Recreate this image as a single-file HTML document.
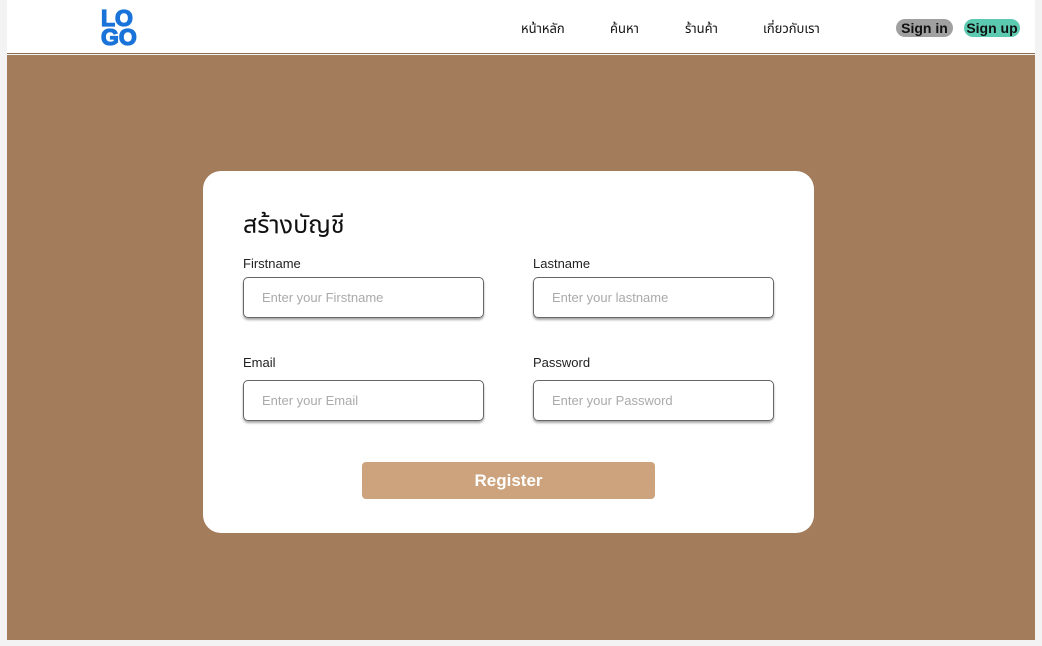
<!DOCTYPE html>
<html><head><meta charset="utf-8"><style>
*{margin:0;padding:0;box-sizing:border-box}
body{width:1042px;height:646px;background:#f3f3f3;font-family:"Liberation Sans","Noto Sans Thai","Tlwg Typist",sans-serif;position:relative;overflow:hidden}
.hdr{position:absolute;left:7px;top:0;width:1028px;height:54px;background:#fff;border-bottom:1px solid #8a6d55}
.logo{position:absolute;left:101px;top:9px;color:#1a73d9;font-weight:bold;font-size:23px;line-height:19px;letter-spacing:0px;-webkit-text-stroke:1.3px #1a73d9}
.nav{position:absolute;top:19px;font-size:13px;color:#111}
.pill{position:absolute;top:19px;height:18px;border-radius:9px;font-weight:bold;font-size:14px;line-height:18px;text-align:center;color:#111}
.main{position:absolute;left:7px;top:55px;width:1028px;height:585px;background:#a37c5c}
.card{position:absolute;left:203px;top:171px;width:611px;height:362px;background:#fff;border-radius:18px}
h1{position:absolute;left:40px;top:36px;font-size:25px;font-weight:normal;color:#111}
.lbl{position:absolute;font-size:13px;color:#222}
.inp{position:absolute;width:241px;height:41px;border:1px solid #666;border-radius:5px;box-shadow:0 2px 2px rgba(0,0,0,.35);font-size:13px;color:#aaa;padding-left:18px;line-height:39px}
.btn{position:absolute;left:159px;top:291px;width:293px;height:37px;background:#cca37c;border-radius:4px;color:#fff;font-weight:bold;font-size:17px;text-align:center;line-height:37px}
</style></head><body>
<div class="hdr"></div>
<div class="logo">LO<br>GO</div>
<div class="nav" style="left:521px">หน้าหลัก</div>
<div class="nav" style="left:610px">ค้นหา</div>
<div class="nav" style="left:685px">ร้านค้า</div>
<div class="nav" style="left:763px">เกี่ยวกับเรา</div>
<div class="pill" style="left:896px;width:57px;background:#a0a0a0">Sign in</div>
<div class="pill" style="left:964px;width:56px;background:#5ccab0">Sign up</div>
<div class="main"></div>
<div class="card">
<h1>สร้างบัญชี</h1>
<div class="lbl" style="left:40px;top:85px">Firstname</div>
<div class="lbl" style="left:330px;top:85px">Lastname</div>
<div class="inp" style="left:40px;top:106px">Enter your Firstname</div>
<div class="inp" style="left:330px;top:106px">Enter your lastname</div>
<div class="lbl" style="left:40px;top:184px">Email</div>
<div class="lbl" style="left:330px;top:184px">Password</div>
<div class="inp" style="left:40px;top:209px">Enter your Email</div>
<div class="inp" style="left:330px;top:209px">Enter your Password</div>
<div class="btn">Register</div>
</div>
</body></html>
